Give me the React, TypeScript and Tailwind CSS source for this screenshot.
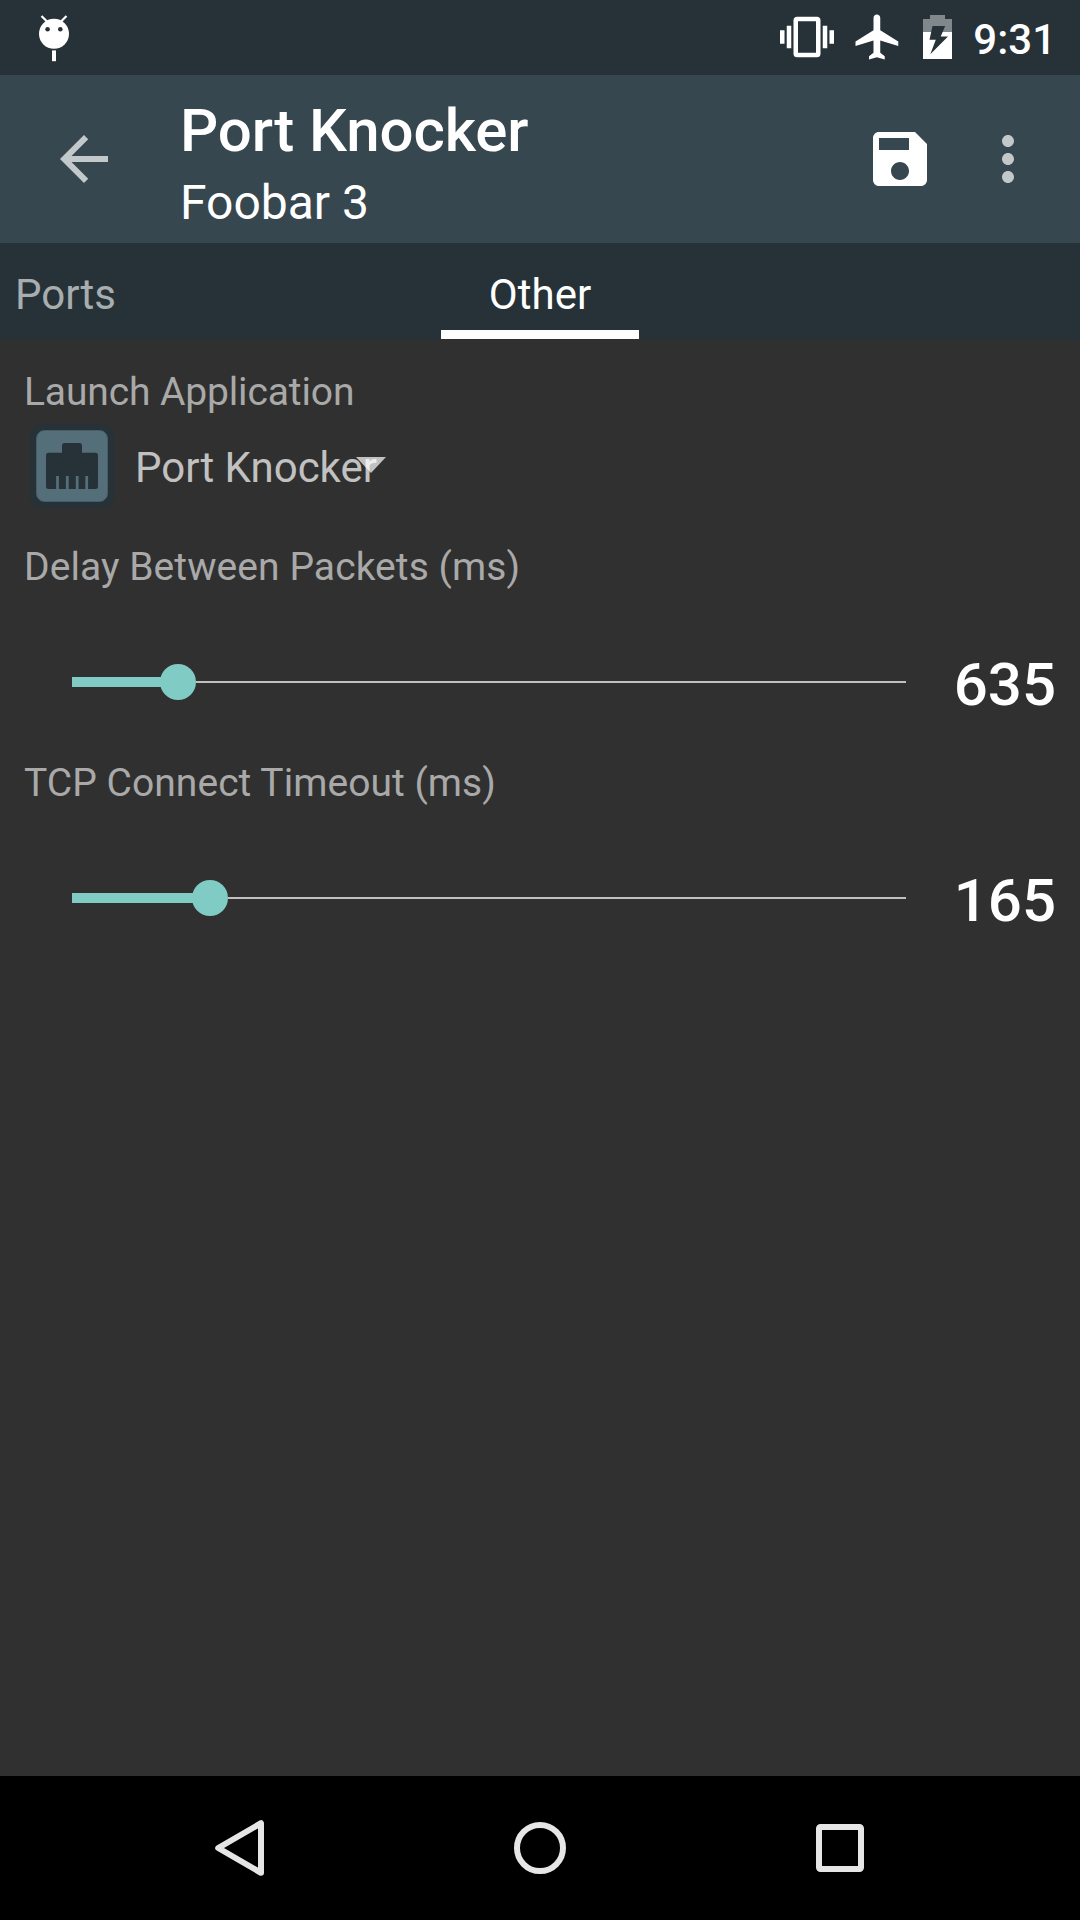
import React from "react";

function StatusBar() {
  return (
    <div className="flex h-[75px] items-start bg-[#263238] text-white">
      <svg className="h-[75px] w-[108px]" viewBox="0 0 108 75" fill="currentColor">
        <circle cx="54" cy="33.8" r="15" />
        <path d="M41.5 16 L47 21.5 M66.5 16 L61 21.5" stroke="currentColor" strokeWidth="2.2" />
        <path d="M52 50.4h4V61.2h-4z" />
        <circle cx="47.6" cy="29.3" r="2.3" fill="#263238" />
        <circle cx="60.3" cy="29.3" r="2.3" fill="#263238" />
      </svg>
      <div className="flex-1" />
      <svg className="mt-[10px] size-[54px]" viewBox="0 0 24 24" fill="currentColor">
        <path d="M0 15h2V9H0v6zm3 2h2V7H3v10zm19-8v6h2V9h-2zm-3 8h2V7h-2v10zM16.5 3h-9C6.67 3 6 3.67 6 4.5v15c0 .83.67 1.5 1.5 1.5h9c.83 0 1.5-.67 1.5-1.5v-15c0-.83-.67-1.5-1.5-1.5zM16 19H8V5h8v14z" />
      </svg>
      <svg className="mt-[10px] ml-[17px] size-[54px]" viewBox="0 0 24 24" fill="currentColor">
        <path d="M21 16v-2l-8-5V3.5c0-.83-.67-1.5-1.5-1.5S10 2.67 10 3.5V9l-8 5v2l8-2.5V19l-2 1.5V22l3.5-1 3.5 1v-1.5L13 19v-5.5l8 2.5z" />
      </svg>
      <svg className="mt-[15px] ml-[18px] h-[44px] w-[29px]" viewBox="0 0 29 44" fill="currentColor">
        <path d="M0 4h7V0h15v4h7v13H0z" opacity="0.42" />
        <path d="M0 17h29v27H0z" />
        <path d="M9.5 11H22.2L17.7 21.5H25L7.3 39.3L12.8 24.7H6.500z" fill="#263238" />
      </svg>
      <span className="mt-[15px] mr-[24px] ml-[21px] text-[42px] leading-[49px] font-medium">9:31</span>
    </div>
  );
}

function AppBar() {
  return (
    <header className="flex h-[168px] items-center bg-[#37474f] text-white">
      <svg className="ml-[48px] size-[72px] opacity-70" viewBox="0 0 24 24" fill="currentColor">
        <path d="M20 11H7.83l5.59-5.59L12 4l-8 8 8 8 1.41-1.41L7.83 13H20v-2z" />
      </svg>
      <div className="ml-[60px] flex flex-1 flex-col self-start pt-[20px]">
        <h1 className="text-[60px] leading-[71px] font-medium tracking-[-0.12px]">Port Knocker</h1>
        <h2 className="text-[48px] leading-[73px]">Foobar 3</h2>
      </div>
      <svg className="mr-[36px] size-[72px]" viewBox="0 0 24 24" fill="currentColor">
        <path d="M17 3H5c-1.11 0-2 .9-2 2v14c0 1.1.89 2 2 2h14c1.1 0 2-.9 2-2V7l-4-4zm-5 16c-1.66 0-3-1.34-3-3s1.34-3 3-3 3 1.34 3 3-1.34 3-3 3zm3-10H5V5h10v4z" />
      </svg>
      <svg className="mr-[36px] size-[72px] opacity-70" viewBox="0 0 24 24" fill="currentColor">
        <path d="M12 8c1.1 0 2-.9 2-2s-.9-2-2-2-2 .9-2 2 .9 2 2 2zm0 2c-1.1 0-2 .9-2 2s.9 2 2 2 2-.9 2-2-.9-2-2-2zm0 6c-1.1 0-2 .9-2 2s.9 2 2 2 2-.9 2-2-.9-2-2-2z" />
      </svg>
    </header>
  );
}

function Tabs() {
  return (
    <nav className="grid h-[96px] grid-cols-[441px_198px_441px] bg-[#263238] text-[42px] leading-[49px]">
      <span className="pt-[27px] pl-[15px] text-[#a8adaf]">Ports</span>
      <span className="border-b-[9px] border-white pt-[27px] text-center text-white">Other</span>
    </nav>
  );
}

function AppIcon() {
  return (
    <svg className="size-[86px]" viewBox="29 423 86 86">
      <rect x="29.5" y="423.5" width="85" height="85" rx="13" fill="#263238" />
      <rect x="36.5" y="430.5" width="71" height="71" rx="8" fill="#546e7a" stroke="#465d68" />
      <path
        d="M48.5 452.7H62V445.5a2.5 2.5 0 0 1 2.5-2.5H79.5a2.5 2.5 0 0 1 2.5 2.5V452.7H95.5a2.5 2.5 0 0 1 2.5 2.5V486.5a2.5 2.5 0 0 1-2.5 2.5H48.5a2.5 2.5 0 0 1-2.5-2.5V455.2a2.5 2.5 0 0 1 2.5-2.5z"
        fill="#263238"
      />
      <path d="M57.5 489V476M67.3 489V476M77.2 489V476M86.7 489V476" stroke="#546e7a" strokeWidth="2.8" />
    </svg>
  );
}

function Label({ children, tracking }: { children: string; tracking: string }) {
  return <h3 className={`text-[39px] leading-[46px] text-[#a9a9a9] ${tracking}`}>{children}</h3>;
}

function SliderRow({ label, tracking, value, fill }: { label: string; tracking: string; value: number; fill: number }) {
  return (
    <section className="h-[216px] pl-[24px]">
      <Label tracking={tracking}>{label}</Label>
      <div className="mt-[56px] flex h-[72px] items-center pl-[48px]">
        <div className="flex w-[834px] items-center">
          <div className="h-[10px] bg-[#80cbc4]" style={{ width: fill }} />
          <div className="-ml-px size-[36px] rounded-full bg-[#80cbc4]" />
          <div className="h-[2px] flex-1 bg-[#c1c1c1]" />
        </div>
        <span className="mt-[3px] flex-1 self-start pr-[24px] text-right text-[60px] leading-[71px] font-medium text-white">
          {value}
        </span>
      </div>
    </section>
  );
}

function NavBar() {
  return (
    <footer className="flex h-[144px] items-center justify-center gap-[228px] bg-black text-[#e6e6e6]">
      <svg className="size-[72px]" viewBox="0 0 72 72" fill="none" stroke="currentColor" strokeWidth="6" strokeLinejoin="round">
        <path d="M57 11.2V60.8L14.2 36z" />
      </svg>
      <svg className="size-[72px]" viewBox="0 0 72 72" fill="none" stroke="currentColor" strokeWidth="6">
        <circle cx="36" cy="36" r="23" />
      </svg>
      <svg className="size-[72px]" viewBox="0 0 72 72" fill="none" stroke="currentColor" strokeWidth="6">
        <rect x="15" y="15" width="42" height="42" rx="1.5" />
      </svg>
    </footer>
  );
}

export default function App() {
  return (
    <div className="flex h-[1920px] w-[1080px] flex-col overflow-hidden bg-[#303030] font-['Roboto',sans-serif]">
      <StatusBar />
      <AppBar />
      <Tabs />
      <main className="flex-1 pt-[30px]">
        <div className="pl-[24px]">
          <Label tracking="tracking-[-0.13px]">Launch Application</Label>
        </div>
        <div className="mt-[8px] mb-[35px] flex h-[86px] items-start pl-[29px]">
          <AppIcon />
          <div className="relative mt-[20px] ml-[20px] text-[42px] leading-[49px] text-[#c1c1c1]">
            Port Knocker
            <svg className="absolute top-[14px] left-[221px] h-[16px] w-[30px]" viewBox="0 0 30 16" fill="#fff">
              <path d="M0 0H30L15 16z" opacity="0.7" />
            </svg>
          </div>
        </div>
        <SliderRow label="Delay Between Packets (ms)" tracking="tracking-[0.07px]" value={635} fill={89} />
        <SliderRow label="TCP Connect Timeout (ms)" tracking="tracking-[0.04px]" value={165} fill={121} />
      </main>
      <NavBar />
    </div>
  );
}
